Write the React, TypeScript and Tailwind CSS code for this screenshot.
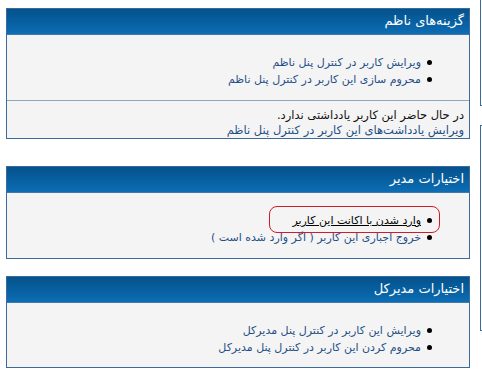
import React from "react";

const font = { fontFamily: '"DejaVu Sans", Tahoma, sans-serif' };

function Bullet() {
  return <span className="inline-block w-[5px] h-[5px] rounded-full bg-black shrink-0" />;
}

function Item({ children, className = "" }: { children: React.ReactNode; className?: string }) {
  return (
    <li className="flex items-center gap-[6px] h-[17px]">
      <Bullet />
      <a className={"text-[#1e4f86] text-[11px] leading-[17px] whitespace-nowrap " + className}>{children}</a>
    </li>
  );
}

function Header({ title }: { title: string }) {
  return (
    <div className="h-[26px] flex items-center px-[5px] pb-[1px] text-white text-[13px] bg-gradient-to-b from-[#04528c] to-[#0d6db4] border-b border-[#3f79ad]">
      {title}
    </div>
  );
}

export default function App() {
  return (
    <div className="w-[482px] h-[384px] bg-white overflow-hidden flex" style={font}>
      <div dir="rtl" className="w-[480px] shrink-0 flex flex-col pt-[8px] pl-[6px] pr-[10px]">
        <div className="border border-[#3b6a9b]">
          <Header title="گزینه‌های ناظم" />
          <div className="bg-[#f4f4f4] border-b border-[#8ea6c0] pt-[19px] pb-[12px]">
            <ul className="pr-[37px]">
              <Item>ویرایش کاربر در کنترل پنل ناظم</Item>
              <Item>محروم سازی این کاربر در کنترل پنل ناظم</Item>
            </ul>
          </div>
          <div className="bg-[#f4f4f4] px-[5px] pt-[7px] text-[11.5px] leading-[15px]">
            <div className="text-[#111]">در حال حاضر این کاربر یادداشتی ندارد.</div>
            <a className="text-[#1e4f86]">ویرایش یادداشت‌های این کاربر در کنترل پنل ناظم</a>
          </div>
        </div>

        <div className="border border-[#3b6a9b] mt-[27px]">
          <Header title="اختیارات مدیر" />
          <div className="bg-[#f4f4f4] pt-[19px] pb-[12px]">
            <ul className="pr-[37px]">
              <li className="relative flex items-center gap-[6px] h-[17px]">
                <Bullet />
                <a className="text-black underline text-[11px] leading-[17px] whitespace-nowrap">وارد شدن با اکانت این کاربر</a>
                <span className="absolute right-[-8px] top-[-6px] bottom-[-4px] border border-[#d11a2a] rounded-[8px] w-[171px]" />
              </li>
              <Item>خروج اجباری این کاربر ( اگر وارد شده است )</Item>
            </ul>
          </div>
        </div>

        <div className="border border-[#3b6a9b] mt-[17px]">
          <Header title="اختیارات مدیرکل" />
          <div className="bg-[#f4f4f4] pt-[19px] pb-[11px]">
            <ul className="pr-[37px]">
              <Item>ویرایش این کاربر در کنترل پنل مدیرکل</Item>
              <Item>محروم کردن این کاربر در کنترل پنل مدیرکل</Item>
            </ul>
          </div>
        </div>
      </div>
      <div className="flex flex-col w-[10px] shrink-0">
        <div className="h-[106px] border-l border-b border-[#3b6a9b]" />
        <div className="h-[19px]" />
        <div className="h-[206px] border-l border-t border-b border-[#3b6a9b]" />
      </div>
    </div>
  );
}
